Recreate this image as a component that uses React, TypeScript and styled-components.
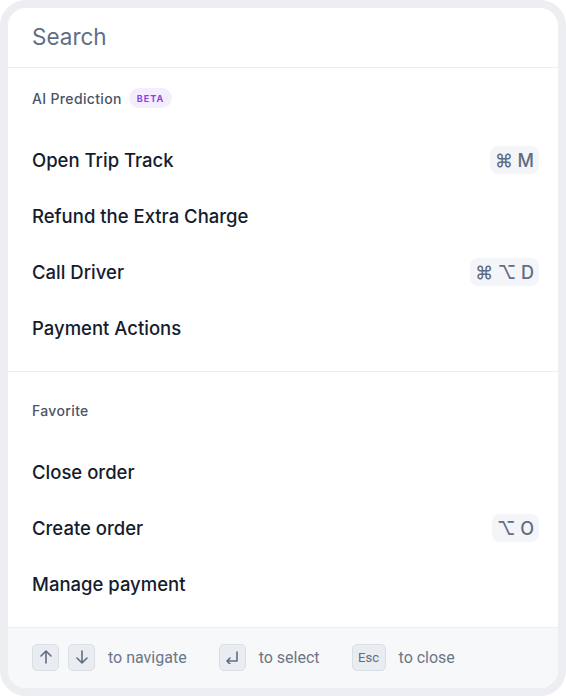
import React from "react";
import styled, { createGlobalStyle } from "styled-components";

const Global = createGlobalStyle`
  html, body { margin: 0; padding: 0; background: #ffffff; }
  * { box-sizing: border-box; }
`;

const Frame = styled.div`
  width: 566px;
  height: 696px;
  border: 8px solid #edeef2;
  border-radius: 26px;
  background: #ffffff;
  overflow: hidden;
  display: flex;
  flex-direction: column;
  font-family: Inter, Roboto, "Liberation Sans", sans-serif;
`;

const Header = styled.div`
  height: 60px;
  flex: none;
  display: flex;
  align-items: center;
  padding: 0 24px 2px;
  border-bottom: 1px solid #eceef1;
  font-size: 22.5px;
  color: #5f6e85;
`;

const Section = styled.div<{ $top: number; $divider?: boolean }>`
  padding: ${(p) => p.$top}px 19px 15px 24px;
  border-bottom: ${(p) => (p.$divider ? "1px solid #eceef1" : "none")};
  display: flex;
  flex-direction: column;
`;

const Label = styled.div`
  height: 20px;
  margin-bottom: 24px;
  display: flex;
  align-items: center;
  gap: 7px;
  font-size: 14px;
  letter-spacing: 0.35px;
  font-weight: 500;
  color: #4a5568;
`;

const Beta = styled.span`
  height: 20px;
  padding: 0 8px;
  border-radius: 10px;
  background: #f3edfd;
  color: #8a44df;
  font-size: 9px;
  font-weight: 700;
  letter-spacing: 1px;
  display: inline-flex;
  align-items: center;
`;

const Row = styled.div`
  height: 56px;
  display: flex;
  align-items: center;
  justify-content: space-between;
  font-size: 18.5px;
  font-weight: 500;
  color: #141c2e;
`;

const Shortcut = styled.span`
  height: 28px;
  padding: 0 5px;
  border-radius: 8px;
  background: #f4f5f8;
  color: #5e6d84;
  font-size: 18px;
  font-weight: 500;
  display: inline-flex;
  align-items: center;
  gap: 3px;
`;

const Spacer = styled.div`
  flex: 1;
`;

const Footer = styled.div`
  height: 61px;
  flex: none;
  background: #f7f8fa;
  border-top: 1px solid #eceef1;
  display: flex;
  align-items: center;
  padding: 0 24px 2px;
  gap: 32px;
  font-family: Roboto, "Liberation Sans", sans-serif;
`;

const Hint = styled.div`
  display: flex;
  align-items: center;
  gap: 13px;
  font-size: 16px;
  color: #6b7689;
`;

const Keys = styled.div`
  display: flex;
  gap: 9px;
`;

const Key = styled.span<{ $w?: number }>`
  width: ${(p) => p.$w ?? 27}px;
  height: 27px;
  border-radius: 5px;
  background: #e9ecf1;
  border: 1px solid #d9dde4;
  color: #5e6d84;
  font-size: 13px;
  display: inline-flex;
  align-items: center;
  justify-content: center;
`;

const ArrowUp = () => (
  <svg width="14" height="16" viewBox="0 0 14 16" fill="none" stroke="#5e6d84" strokeWidth="1.6" strokeLinecap="round" strokeLinejoin="round">
    <path d="M7 14V2M2 7l5-5 5 5" />
  </svg>
);

const ArrowDown = () => (
  <svg width="14" height="16" viewBox="0 0 14 16" fill="none" stroke="#5e6d84" strokeWidth="1.6" strokeLinecap="round" strokeLinejoin="round">
    <path d="M7 2v12M2 9l5 5 5-5" />
  </svg>
);

const EnterIcon = () => (
  <svg width="16" height="14" viewBox="0 0 16 14" fill="none" stroke="#5e6d84" strokeWidth="1.6" strokeLinecap="round" strokeLinejoin="round">
    <path d="M13 2v9H3M6 8l-3 3 3 3" />
  </svg>
);

type Item = { name: string; keys?: string };

const ai: Item[] = [
  { name: "Open Trip Track", keys: "⌘ M" },
  { name: "Refund the Extra Charge" },
  { name: "Call Driver", keys: "⌘ ⌥ D" },
  { name: "Payment Actions" },
];

const fav: Item[] = [
  { name: "Close order" },
  { name: "Create order", keys: "⌥ O" },
  { name: "Manage payment" },
];

const Rows = ({ items }: { items: Item[] }) => (
  <>
    {items.map((it) => (
      <Row key={it.name}>
        <span>{it.name}</span>
        {it.keys && <Shortcut>{it.keys}</Shortcut>}
      </Row>
    ))}
  </>
);

export default function App() {
  return (
    <>
      <Global />
      <Frame>
        <Header>Search</Header>
        <Section $top={20} $divider>
          <Label>
            AI Prediction <Beta>BETA</Beta>
          </Label>
          <Rows items={ai} />
        </Section>
        <Section $top={28}>
          <Label>Favorite</Label>
          <Rows items={fav} />
        </Section>
        <Spacer />
        <Footer>
          <Hint>
            <Keys>
              <Key><ArrowUp /></Key>
              <Key><ArrowDown /></Key>
            </Keys>
            to navigate
          </Hint>
          <Hint>
            <Key><EnterIcon /></Key>
            to select
          </Hint>
          <Hint>
            <Key $w={34}>Esc</Key>
            to close
          </Hint>
        </Footer>
      </Frame>
    </>
  );
}
